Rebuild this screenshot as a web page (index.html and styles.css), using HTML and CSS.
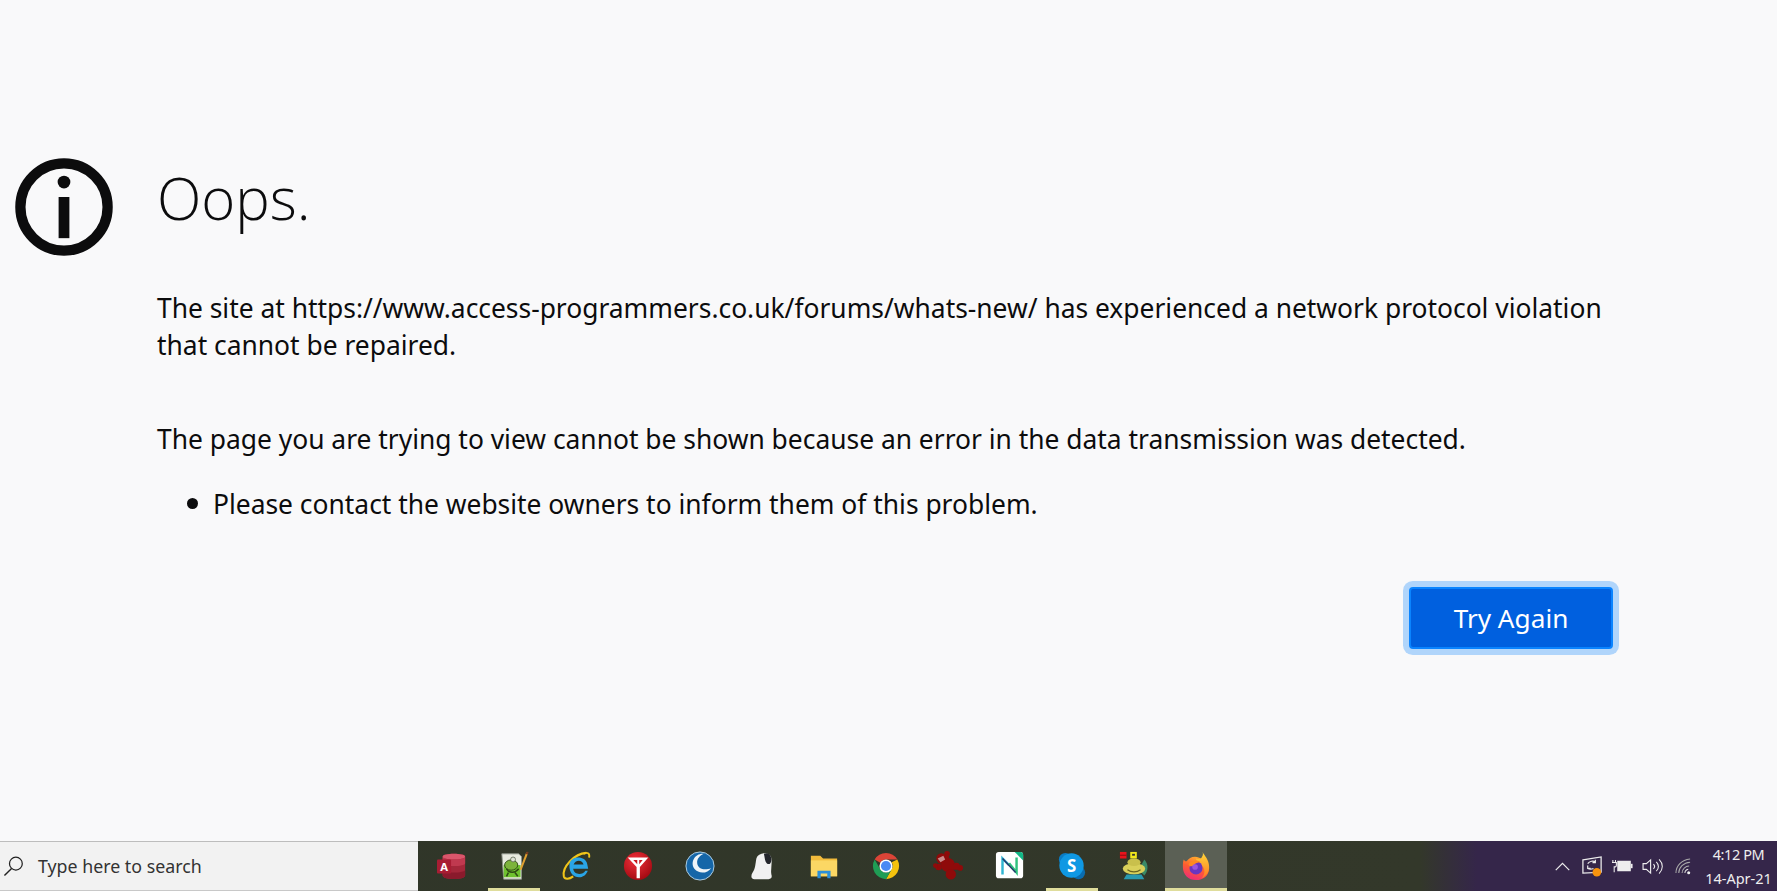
FILE: index.html
```html
<!DOCTYPE html>
<html lang="en">
<head>
  <meta charset="UTF-8">
  <meta name="viewport" content="width=device-width, initial-scale=1.0">
  <title>Oops.</title>
  <link rel="stylesheet" href="styles.css">
</head>
<body>
  <main class="error-page">
    <svg class="info-icon" viewBox="0 0 100 100">
      <circle cx="50" cy="50" r="44.5" fill="none" stroke="#0c0c0d" stroke-width="10.5"/>
      <circle cx="50" cy="24.5" r="6.5" fill="#0c0c0d"/>
      <rect x="44.5" y="39.8" width="11" height="42" fill="#0c0c0d"/>
    </svg>
    <div class="error-content">
      <h1>Oops.</h1>
      <p class="first">The site at https://www.access-programmers.co.uk/forums/whats-new/ has experienced a network protocol violation that cannot be repaired.</p>
      <p class="second">The page you are trying to view cannot be shown because an error in the data transmission was detected.</p>
      <ul>
        <li>Please contact the website owners to inform them of this problem.</li>
      </ul>
      <div class="actions">
        <button class="try-again">Try Again</button>
      </div>
    </div>
  </main>

  <footer class="taskbar">
    <div class="search-box">
      <svg class="search-icon" viewBox="0 0 22 22">
        <circle cx="13.5" cy="8" r="6.7" fill="none" stroke="#222" stroke-width="1.3"/>
        <path d="M9 13 L1.5 20.5" stroke="#222" stroke-width="1.5"/>
      </svg>
      <span>Type here to search</span>
    </div>

    <div class="apps">
      <!-- access -->
      <div class="app">
        <svg viewBox="0 0 32 32">
          <path d="M6 6 C6 2 30 2 30 6 V26 C30 31 6 31 6 26 Z" fill="#a4273a"/>
          <path d="M6 6 C6 2 30 2 30 6 C30 10 6 10 6 6 Z" fill="#d9566b"/>
          <path d="M6 6 C6 10 30 10 30 6 V13 C30 17 6 17 6 13 Z" fill="#c0394f"/>
          <path d="M6 20 C6 24 30 24 30 20 V26 C30 31 6 31 6 26 Z" fill="#8a1a2c"/>
          <rect x="0" y="9" width="15" height="15" rx="1" fill="#a81d33"/>
          <text x="7.5" y="21" class="app-letter" font-size="12">A</text>
        </svg>
      </div>
      <!-- notepad++ -->
      <div class="app underlined">
        <svg viewBox="0 0 32 32">
          <path d="M3 3 H21 L24 6 V30 L5 30 Z" fill="#e8ebe0" stroke="#8d938a" stroke-width="1"/>
          <rect x="5" y="15" width="18" height="13" fill="#6fc22f"/>
          <ellipse cx="13" cy="15" rx="7" ry="5.5" fill="#7cb33c" stroke="#2e4a14" stroke-width="1"/>
          <path d="M8 19 C11 24 17 24 21 19 M10 23 L8 27 M17 23 L20 27" stroke="#2e4a14" stroke-width="1.6" fill="none"/>
          <circle cx="15" cy="9" r="2.6" fill="#dfe3d6" stroke="#55604c" stroke-width=".8"/>
          <path d="M23 20 L30 2" stroke="#e0a030" stroke-width="2.2"/>
          <path d="M29.5 3.5 L30.6 1" stroke="#7a3a20" stroke-width="2.2"/>
        </svg>
      </div>
      <!-- internet explorer -->
      <div class="app">
        <svg viewBox="0 0 32 32">
          <path d="M27 2 C14 3 1 17 3 27 C4 31 9 30 13 27" fill="none" stroke="#f0c419" stroke-width="2.2"/>
          <path d="M9 15 C9 5 26 4 28 14 L29 19 H13 C14 26 23 26 26 21 H28.5 C25 32 8 30 9 15 Z" fill="#2aa5e6"/>
          <path d="M13.5 14.5 C15 9 23 9 24 14.5 Z" fill="#2b2f24"/>
          <path d="M24 3 C28 1 31 2 30 7" fill="none" stroke="#f0c419" stroke-width="2"/>
        </svg>
      </div>
      <!-- red antenna -->
      <div class="app">
        <svg viewBox="0 0 32 32">
          <defs>
            <radialGradient id="redBall" cx="40%" cy="30%" r="75%">
              <stop offset="0" stop-color="#f0303a"/>
              <stop offset="1" stop-color="#a00810"/>
            </radialGradient>
          </defs>
          <circle cx="16" cy="16" r="15" fill="url(#redBall)"/>
          <path d="M5 7 H27 L18 17 V29 H14.5 V17 Z" fill="#fff"/>
          <path d="M11 9.5 L15.2 14 V9.5 Z M21 9.5 L17.3 14 V9.5 Z" fill="#c81820"/>
        </svg>
      </div>
      <!-- glary -->
      <div class="app">
        <svg viewBox="0 0 32 32">
          <circle cx="16" cy="16" r="15" fill="#1566a8" stroke="#b5d3e6" stroke-width="1"/>
          <path d="M20 3 C11 2 5 12 10 19 C15 25 24 24 28 18 C22 21 14 20 13 13 C12.5 8 16 5 20 3 Z" fill="#eef4f8"/>
        </svg>
      </div>
      <!-- webcam -->
      <div class="app">
        <svg viewBox="0 0 32 32">
          <path d="M8 30 C4 30 4 26 6 23 C9 19 9 13 10 8 C12 1 25 0 26 8 C27 14 25 20 26 25 C27 28 26 30 23 30 Z" fill="#f1f1f1"/>
          <path d="M18 3 C22 1 26 4 26 9 C26 14 23 15 21 13 C19 11 19 7 18 3 Z" fill="#23252b"/>
        </svg>
      </div>
      <!-- folder -->
      <div class="app">
        <svg viewBox="0 0 32 32">
          <path d="M2 5 H12 L15 8 H30 V27 H2 Z" fill="#f2bb3c"/>
          <rect x="2" y="10" width="28" height="17" fill="#fbd764"/>
          <path d="M9 29 V21 H23 V29 H19.5 V24 H12.5 V29 Z" fill="#2b8fd8"/>
        </svg>
      </div>
      <!-- chrome -->
      <div class="app">
        <svg viewBox="0 0 32 32">
          <path d="M16 2 A14 14 0 0 1 28.1 9 H16 A7 7 0 0 0 9.9 12.5 L3.9 9 A14 14 0 0 1 16 2 Z" fill="#dc4437"/>
          <path d="M28.1 9 A14 14 0 0 1 16 30 L22 19.5 A7 7 0 0 0 22 12 L28.1 9 Z" fill="#f4c20d"/>
          <path d="M3.9 9 A14 14 0 0 0 16 30 L22 19.5 A7 7 0 0 1 9.9 19.5 Z" fill="#1f9d55"/>
          <circle cx="16" cy="16" r="7" fill="#fff"/>
          <circle cx="16" cy="16" r="5.4" fill="#4a8af4"/>
        </svg>
      </div>
      <!-- red splat -->
      <div class="app">
        <svg viewBox="0 0 32 32" fill="#8f0a0a">
          <circle cx="9" cy="8" r="5.5"/>
          <circle cx="15" cy="3" r="3"/>
          <circle cx="16" cy="15" r="7.5"/>
          <circle cx="6" cy="17" r="3.5"/>
          <circle cx="2.5" cy="15.5" r="2.5"/>
          <circle cx="25" cy="16" r="3.5"/>
          <circle cx="29" cy="18" r="3"/>
          <circle cx="19" cy="25" r="5.5"/>
          <path d="M13 3 H17 V10 H13 Z M16 15 H28 V20 H16 Z"/>
          <path d="M5 8 L11 5 L13 9 L8 12 Z" fill="#c98a8a"/>
        </svg>
      </div>
      <!-- n tile -->
      <div class="app">
        <svg viewBox="0 0 32 32">
          <rect x="1" y="1" width="29" height="28" rx="3" fill="#fff"/>
          <path d="M21 1 H27 A3 3 0 0 1 30 4 V10 Z" fill="#12b886"/>
          <path d="M8 25 V8 L15 15" fill="none" stroke="#2fb5d2" stroke-width="2.6"/>
          <path d="M23 7 V23 L15 13" fill="none" stroke="#2ec27e" stroke-width="2.6"/>
          <path d="M8 8 L22 23" stroke="#253a6e" stroke-width="1.6"/>
        </svg>
      </div>
      <!-- skype -->
      <div class="app underlined">
        <svg viewBox="0 0 32 32">
          <circle cx="9" cy="9" r="7" fill="#0a7cc4"/>
          <circle cx="23" cy="23" r="7" fill="#0a6db0"/>
          <circle cx="15.5" cy="15.5" r="13" fill="#0f98e3"/>
          <text x="15.5" y="22" class="app-letter" font-size="18">S</text>
        </svg>
      </div>
      <!-- toad -->
      <div class="app">
        <svg viewBox="0 0 32 32">
          <rect x="1" y="1" width="7" height="7" fill="#e8141c"/>
          <path d="M1 4.5 H8" stroke="#8a0a10"/>
          <rect x="12" y="1" width="7" height="7" fill="#f2e81c"/>
          <rect x="14" y="3" width="3" height="2" fill="#333"/>
          <path d="M27 9 C32 14 31 22 27 26 L21 20 Z" fill="#3a8a68"/>
          <ellipse cx="16" cy="19" rx="12" ry="6" fill="#d9d05a"/>
          <ellipse cx="16" cy="12" rx="7" ry="4" fill="#c9c04c"/>
          <path d="M5 30 L8 25 H24 L27 30 Z" fill="#2a9ab0"/>
          <path d="M9 20 C13 23 19 23 23 20" stroke="#6b6420" stroke-width="1.2" fill="none"/>
        </svg>
      </div>
      <!-- firefox -->
      <div class="app active">
        <svg viewBox="0 0 32 32">
          <defs>
            <linearGradient id="foxBody" x1="0.7" y1="0" x2="0.3" y2="1">
              <stop offset="0" stop-color="#ffb52e"/>
              <stop offset="0.5" stop-color="#ff5e2f"/>
              <stop offset="1" stop-color="#ee2a7b"/>
            </linearGradient>
            <linearGradient id="foxTail" x1="0.5" y1="0" x2="0.5" y2="1">
              <stop offset="0" stop-color="#ffd83a"/>
              <stop offset="1" stop-color="#ff7a22"/>
            </linearGradient>
          </defs>
          <path d="M3 9 C4 11 5 11 6 11 C8 8 11 6 15 6 C20 6 30 12 30 18 C30 26 24 31 16 31 C8 31 2 25 2 17 C2 14 2 11 3 9 Z" fill="url(#foxBody)"/>
          <path d="M23 1 C25 5 30 9 30 17 C30 22 27 27 22 29 C26 25 26 19 22 15 C19 12 16 11 16 8 C18 9 21 9 22 7 C23 5 24 4 23 1 Z" fill="url(#foxTail)"/>
          <circle cx="16" cy="18" r="7" fill="#6a35c0"/>
          <path d="M8 14 C11 10 17 9 21 12 C18 12 15 13 14 15 C12 17 9 17 8 14 Z" fill="#ff8a1f"/>
          <circle cx="15" cy="17" r="3" fill="#9a55dd"/>
        </svg>
      </div>
    </div>

    <div class="tray">
      <svg class="tray-chevron" viewBox="0 0 18 10">
        <path d="M1.5 9 L9 1.5 L16.5 9" fill="none" stroke="#eee" stroke-width="1.3"/>
      </svg>
      <svg class="tray-update" viewBox="0 0 24 24">
        <path d="M2 5 L21 2 V18 L2 19 Z" fill="none" stroke="#eee" stroke-width="1.3"/>
        <path d="M7 9 C9 6 13 6 15 7 M15 5 V8 H12 M7 14 C9 15 11 15 13 14 M7 11 V14 H10" fill="none" stroke="#eee" stroke-width="1.2"/>
        <circle cx="16.5" cy="18" r="4.5" fill="#f7930e"/>
      </svg>
      <svg class="tray-battery" viewBox="0 0 24 16">
        <path d="M1 1 V4 M4 1 V4 M0 4 H5 V7 C5 9 3 9 2.5 9 V15" fill="none" stroke="#eee" stroke-width="1.2"/>
        <rect x="6" y="2" width="15.5" height="12" fill="#eee"/>
        <rect x="21.5" y="5.5" width="2" height="5" fill="#eee"/>
      </svg>
      <svg class="tray-volume" viewBox="0 0 22 18">
        <path d="M1 6 H4.5 L9 2 V16 L4.5 12 H1 Z" fill="none" stroke="#eee" stroke-width="1.2"/>
        <path d="M12 6.5 C13.5 8 13.5 10 12 11.5 M15 4 C18 7 18 11 15 14 M18 1.5 C22.5 6 22.5 12 18 16.5" fill="none" stroke="#eee" stroke-width="1.1"/>
      </svg>
      <svg class="tray-wifi" viewBox="0 0 18 18">
        <path d="M1 16 C1 8 7 2 16 1 M4 16 C4 10 9 5 16 4.5 M7.5 16 C7.5 12 11 8.5 15 8.5" fill="none" stroke="#aaa" stroke-width="1.1"/>
        <path d="M10.5 16 C10.5 14 12 12.5 14 12" fill="none" stroke="#ddd" stroke-width="1.1"/>
        <circle cx="14.5" cy="15.5" r="1.6" fill="#eee"/>
      </svg>
      <div class="clock">
        <span class="clock-time">4:12 PM</span>
        <span>14-Apr-21</span>
      </div>
    </div>
  </footer>
</body>
</html>
```

FILE: styles.css
```css
* {
  box-sizing: border-box;
}

html, body {
  height: 100%;
}

body {
  margin: 0;
  background-color: #f9f9fa;
  color: #0c0c0d;
  font-family: "Noto Sans", "Open Sans", sans-serif;
  display: flex;
  flex-direction: column;
  overflow: hidden;
}

.error-page {
  flex: 1;
  display: flex;
  align-items: flex-start;
  padding: 158px 0 0 14.5px;
}

.info-icon {
  width: 98px;
  height: 98px;
  flex: none;
}

.error-content {
  width: 1456px;
  margin-left: 44.5px;
}

h1 {
  margin: 0;
  font-size: 58px;
  line-height: 80px;
  font-weight: 300;
  font-family: "Open Sans", "Noto Sans", sans-serif;
}

p {
  margin: 0;
  font-size: 26.4px;
  line-height: 36.5px;
}

.first {
  margin-top: 52px;
}

.second {
  margin-top: 58px;
}

ul {
  margin: 28px 0 0;
  padding-left: 30px;
  list-style: none;
  font-size: 26.4px;
  line-height: 36.5px;
}

li {
  display: flex;
  align-items: center;
  gap: 15px;
}

li::before {
  content: "";
  width: 11px;
  height: 11px;
  border-radius: 50%;
  background: #0c0c0d;
}

.actions {
  display: flex;
  justify-content: flex-end;
  margin-top: 65px;
}

.try-again {
  width: 204px;
  height: 62px;
  border: 2px solid #0a84ff;
  border-radius: 4px;
  background: #0060df;
  color: #fff;
  font-family: inherit;
  font-size: 26.2px;
  box-shadow: 0 0 0 6px #b0d5fb;
}

.taskbar {
  height: 50px;
  flex: none;
  display: flex;
  background: linear-gradient(to right, #2f3528 0, #33382a 1420px, #35264a 1477px, #35264a 100%);
}

.search-box {
  width: 418px;
  flex: none;
  display: flex;
  align-items: center;
  gap: 14px;
  padding-left: 3px;
  background: #f2f2f2;
  border-top: 1px solid #bdbdbd;
  border-bottom: 1px solid #c8c8c8;
  color: #333;
  font-size: 17.8px;
}

.search-icon {
  width: 21px;
  height: 21px;
}

.apps {
  display: flex;
  padding-left: 3px;
}

.app {
  position: relative;
  width: 62px;
  height: 50px;
  padding-bottom: 1px;
  display: flex;
  align-items: center;
  justify-content: center;
}

.app svg {
  width: 30px;
  height: 30px;
}

.app-letter {
  fill: #fff;
  font-family: "Noto Sans", sans-serif;
  font-weight: 700;
  text-anchor: middle;
}

.underlined::after,
.active::after {
  content: "";
  position: absolute;
  bottom: 0;
  left: 5px;
  right: 5px;
  height: 3px;
  background: #dfdd9c;
}

.active {
  background-color: #5b6055;
}

.active::after {
  left: 0;
  right: 0;
}

.tray {
  flex: 1;
  display: flex;
  align-items: center;
  justify-content: flex-end;
  padding-right: 5px;
  color: #eee;
}

.tray-chevron {
  width: 17px;
  height: 9px;
  margin-right: 10px;
}

.tray-update {
  width: 23px;
  height: 23px;
  margin-right: 8px;
}

.tray-battery {
  width: 21px;
  height: 14px;
  margin-right: 9px;
}

.tray-volume {
  width: 21px;
  height: 17px;
  margin-right: 12px;
}

.tray-wifi {
  width: 17px;
  height: 17px;
  margin-right: 13px;
}

.clock {
  width: 67px;
  display: flex;
  flex-direction: column;
  align-items: center;
  gap: 4px;
  font-size: 14.5px;
  line-height: 20px;
  white-space: nowrap;
}

.clock-time {
  letter-spacing: -0.4px;
}
```
